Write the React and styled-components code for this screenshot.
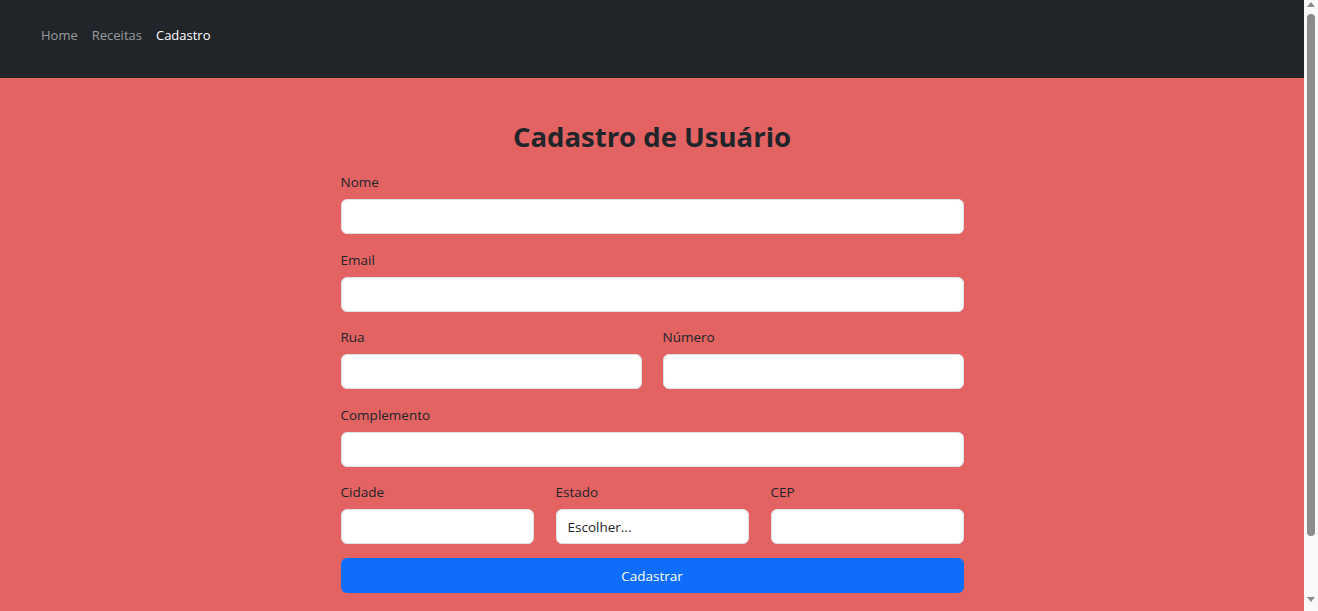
import React from 'react';
import styled, { createGlobalStyle } from 'styled-components';

const GlobalStyle = createGlobalStyle`
  * {
    box-sizing: border-box;
  }

  body {
    margin: 0 14px 0 0;
    font-family: 'Open Sans', 'Noto Sans', sans-serif;
    color: #212529;
    background: #e36363;
  }
`;

// fake window scrollbar, as seen on the right edge of the screenshot
const ScrollTrack = styled.div`
  position: fixed;
  top: 0;
  right: 0;
  width: 14px;
  height: 100vh;
  background: #f9f9f9;
`;

const ScrollArrow = styled.span`
  position: absolute;
  left: 3px;
  ${props => (props.down ? 'bottom: 9px;' : 'top: 2px;')}
  width: 0;
  height: 0;
  border-left: 4px solid transparent;
  border-right: 4px solid transparent;
  ${props =>
    props.down ? 'border-top: 5px solid #8b8b8b;' : 'border-bottom: 5px solid #8b8b8b;'}
`;

const ScrollThumb = styled.span`
  position: absolute;
  top: 14px;
  left: 3px;
  width: 8px;
  height: 522px;
  border-radius: 4px;
  background: #8b8b8b;
`;

const Navbar = styled.nav`
  height: 78px;
  background: #212529;
  display: flex;
  align-items: center;
  padding: 0 0 8px 41px;
  gap: 14px;
`;

const NavItem = styled.a`
  font-size: 13px;
  text-decoration: none;
  color: ${props => (props.active ? '#ffffff' : 'rgba(255, 255, 255, 0.55)')};
  cursor: pointer;
`;

const Main = styled.main`
  min-height: 100vh;
  padding: 40px 0 40px;
  display: flex;
  justify-content: center;
`;

const Form = styled.form`
  width: 623px;
  display: flex;
  flex-direction: column;
  gap: 15.5px;
`;

const Title = styled.h1`
  margin: 0 0 0.5px;
  text-align: center;
  font-size: 27.5px;
  line-height: 38px;
  font-weight: 700;
`;

const Row = styled.div`
  display: grid;
  grid-template-columns: repeat(${props => props.cols || 1}, 1fr);
  column-gap: ${props => (props.cols === 3 ? '22px' : '21px')};
`;

const Field = styled.div`
  display: flex;
  flex-direction: column;
`;

const Label = styled.label`
  font-size: 13.5px;
  line-height: 21px;
  margin-bottom: 6px;
`;

const Input = styled.input`
  height: 35px;
  width: 100%;
  border: 1px solid #dee2e6;
  border-radius: 6px;
  background: #fff;
  padding: 0 12px;
  font-family: inherit;
  font-size: 13.5px;
  color: #212529;
  outline: none;
`;

const Select = styled.select`
  height: 35px;
  width: 100%;
  border: 1px solid #dee2e6;
  border-radius: 6px;
  background: #fff;
  padding: 0 11px;
  font-family: inherit;
  font-size: 13.5px;
  color: #212529;
  appearance: none;
  outline: none;
`;

const Button = styled.button`
  height: 35px;
  margin-top: -1.5px;
  border: none;
  border-radius: 6px;
  background: #0d6efd;
  color: #fff;
  font-family: inherit;
  font-size: 13.5px;
  cursor: pointer;
`;

function FormField({ label, children }) {
  return (
    <Field>
      <Label>{label}</Label>
      {children || <Input type="text" />}
    </Field>
  );
}

export default function App() {
  return (
    <>
      <GlobalStyle />
      <Navbar>
        <NavItem href="/#">Home</NavItem>
        <NavItem href="/#">Receitas</NavItem>
        <NavItem href="/#" active>
          Cadastro
        </NavItem>
      </Navbar>
      <Main>
        <Form onSubmit={e => e.preventDefault()}>
          <Title>Cadastro de Usuário</Title>
          <FormField label="Nome" />
          <FormField label="Email" />
          <Row cols={2}>
            <FormField label="Rua" />
            <FormField label="Número" />
          </Row>
          <FormField label="Complemento" />
          <Row cols={3}>
            <FormField label="Cidade" />
            <FormField label="Estado">
              <Select defaultValue="">
                <option value="">Escolher...</option>
              </Select>
            </FormField>
            <FormField label="CEP" />
          </Row>
          <Button type="submit">Cadastrar</Button>
        </Form>
      </Main>
      <ScrollTrack>
        <ScrollArrow />
        <ScrollThumb />
        <ScrollArrow down />
      </ScrollTrack>
    </>
  );
}
